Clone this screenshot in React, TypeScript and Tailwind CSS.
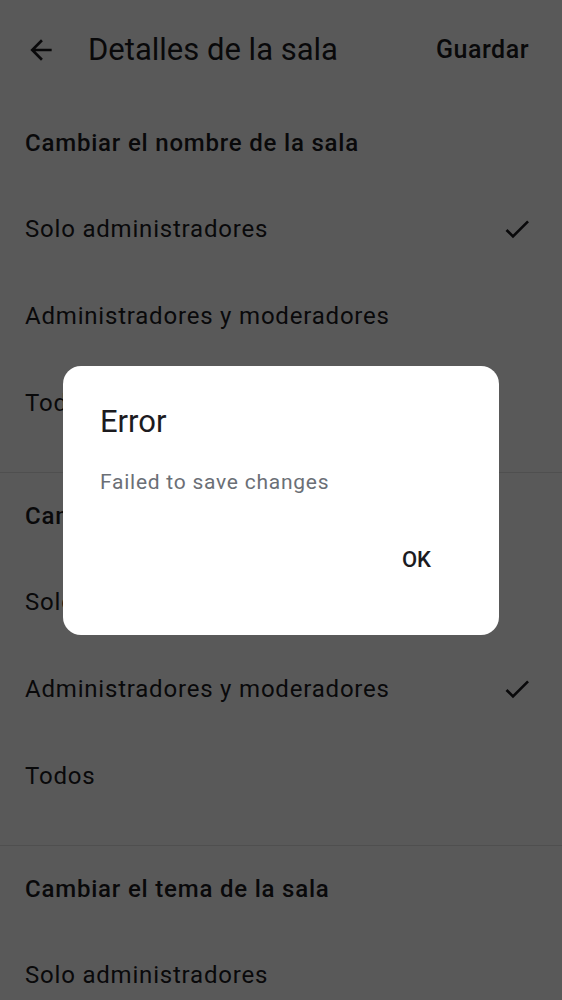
import { Fragment } from "react";

const sections = [
  { title: "Cambiar el nombre de la sala", selected: 0 },
  { title: "Cambiar el avatar de la sala", selected: 1 },
  { title: "Cambiar el tema de la sala", selected: 1 },
];

const options = ["Solo administradores", "Administradores y moderadores", "Todos"];

function ArrowBack() {
  return (
    <svg viewBox="0 0 24 24" className="h-[32px] w-[32px]" fill="currentColor">
      <path d="M20 11H7.83l5.59-5.59L12 4l-8 8 8 8 1.41-1.41L7.83 13H20v-2z" />
    </svg>
  );
}

function Check() {
  return (
    <svg viewBox="0 0 24 24" className="h-[32px] w-[32px]" fill="currentColor">
      <path d="M9 16.17L4.83 12l-1.42 1.41L9 19 21 7l-1.41-1.41z" />
    </svg>
  );
}

export default function App() {
  return (
    <div
      className="relative h-[1000px] w-full overflow-hidden bg-white text-[#1c1b1f]"
      style={{ fontFamily: "Roboto, 'Noto Sans', sans-serif" }}
    >
      {/* top bar */}
      <div className="flex h-[100px] items-center pl-[25px] pr-[33px]">
        <ArrowBack />
        <h1 className="ml-[31px] flex-1 text-[31px] leading-[38px]">Detalles de la sala</h1>
        <button className="text-[25px] font-medium tracking-[0.5px]">Guardar</button>
      </div>

      {sections.map((s, i) => (
        <Fragment key={s.title}>
          {i > 0 && <div className="mt-[26px] h-px bg-[#e3e3e3]" />}
          <div className="flex h-[85px] items-center px-[25px] text-[24px] font-medium tracking-[0.8px]">
            {s.title}
          </div>
          {options.map((o, j) => (
            <div key={o} className="flex h-[87px] items-center justify-between pl-[25px] pr-[29px] text-[24px] tracking-[0.8px]">
              <span>{o}</span>
              {s.selected === j && <Check />}
            </div>
          ))}
        </Fragment>
      ))}

      {/* dialog */}
      <div className="absolute inset-0 flex items-center justify-center bg-black/65">
        <div className="w-[436px] rounded-[18px] bg-white pb-[51px] pl-[37px] pr-[37px] pt-[38px]">
          <h2 className="text-[31px] leading-[36px] text-[#1c1b1f]">Error</h2>
          <p className="mt-[28px] text-[21px] leading-[28px] tracking-[0.75px] text-[#6b6f76]">Failed to save changes</p>
          <div className="mt-[40px] flex justify-end pr-[15px]">
            <button className="h-[48px] px-[16px] text-[22px] font-medium text-[#1c1b1f]">OK</button>
          </div>
        </div>
      </div>
    </div>
  );
}
